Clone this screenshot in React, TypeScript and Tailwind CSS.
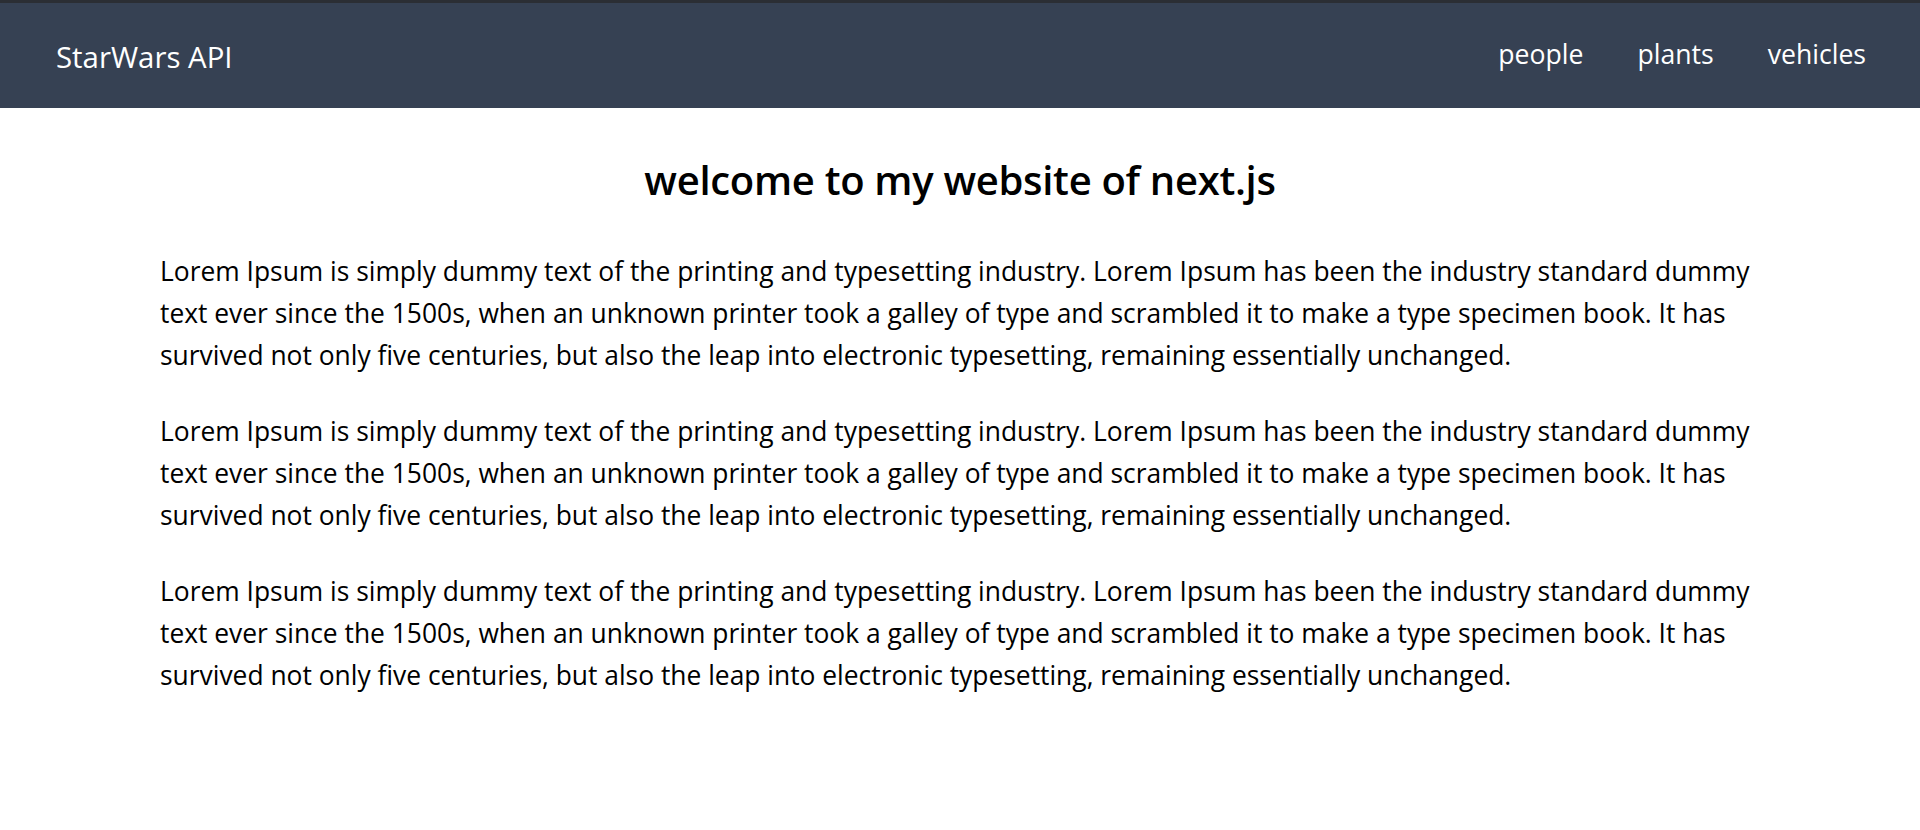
import React from "react";

const lorem =
  "Lorem Ipsum is simply dummy text of the printing and typesetting industry. Lorem Ipsum has been the industry standard dummy text ever since the 1500s, when an unknown printer took a galley of type and scrambled it to make a type specimen book. It has survived not only five centuries, but also the leap into electronic typesetting, remaining essentially unchanged.";

const App = () => {
  const links = ["people", "plants", "vehicles"];

  return (
    <div className="min-h-screen bg-white font-['Open_Sans',sans-serif] text-black">
      {/* Navbar */}
      <nav className="h-[108px] border-t-[3px] border-[#2b2e34] bg-gray-700 flex items-center justify-between pl-[56px] pr-[54px]">
        <div className="text-[29.4px] text-white pt-[4px]">StarWars API</div>
        <div className="flex items-center gap-[54px] pb-[2px]">
          {links.map((l) => (
            <a key={l} href="#" className="text-[26.6px] text-white">
              {l}
            </a>
          ))}
        </div>
      </nav>

      {/* Content */}
      <main className="px-40 pt-[48px]">
        <h1 className="text-center text-[40px] font-semibold leading-[48px] tracking-[-0.3px]">
          welcome to my website of next.js
        </h1>
        <div className="mt-[46px] flex flex-col gap-[34px]">
          {[0, 1, 2].map((i) => (
            <p key={i} className="text-[26.4px] leading-[42px]">
              {lorem}
            </p>
          ))}
        </div>
      </main>
    </div>
  );
};

export default App;
